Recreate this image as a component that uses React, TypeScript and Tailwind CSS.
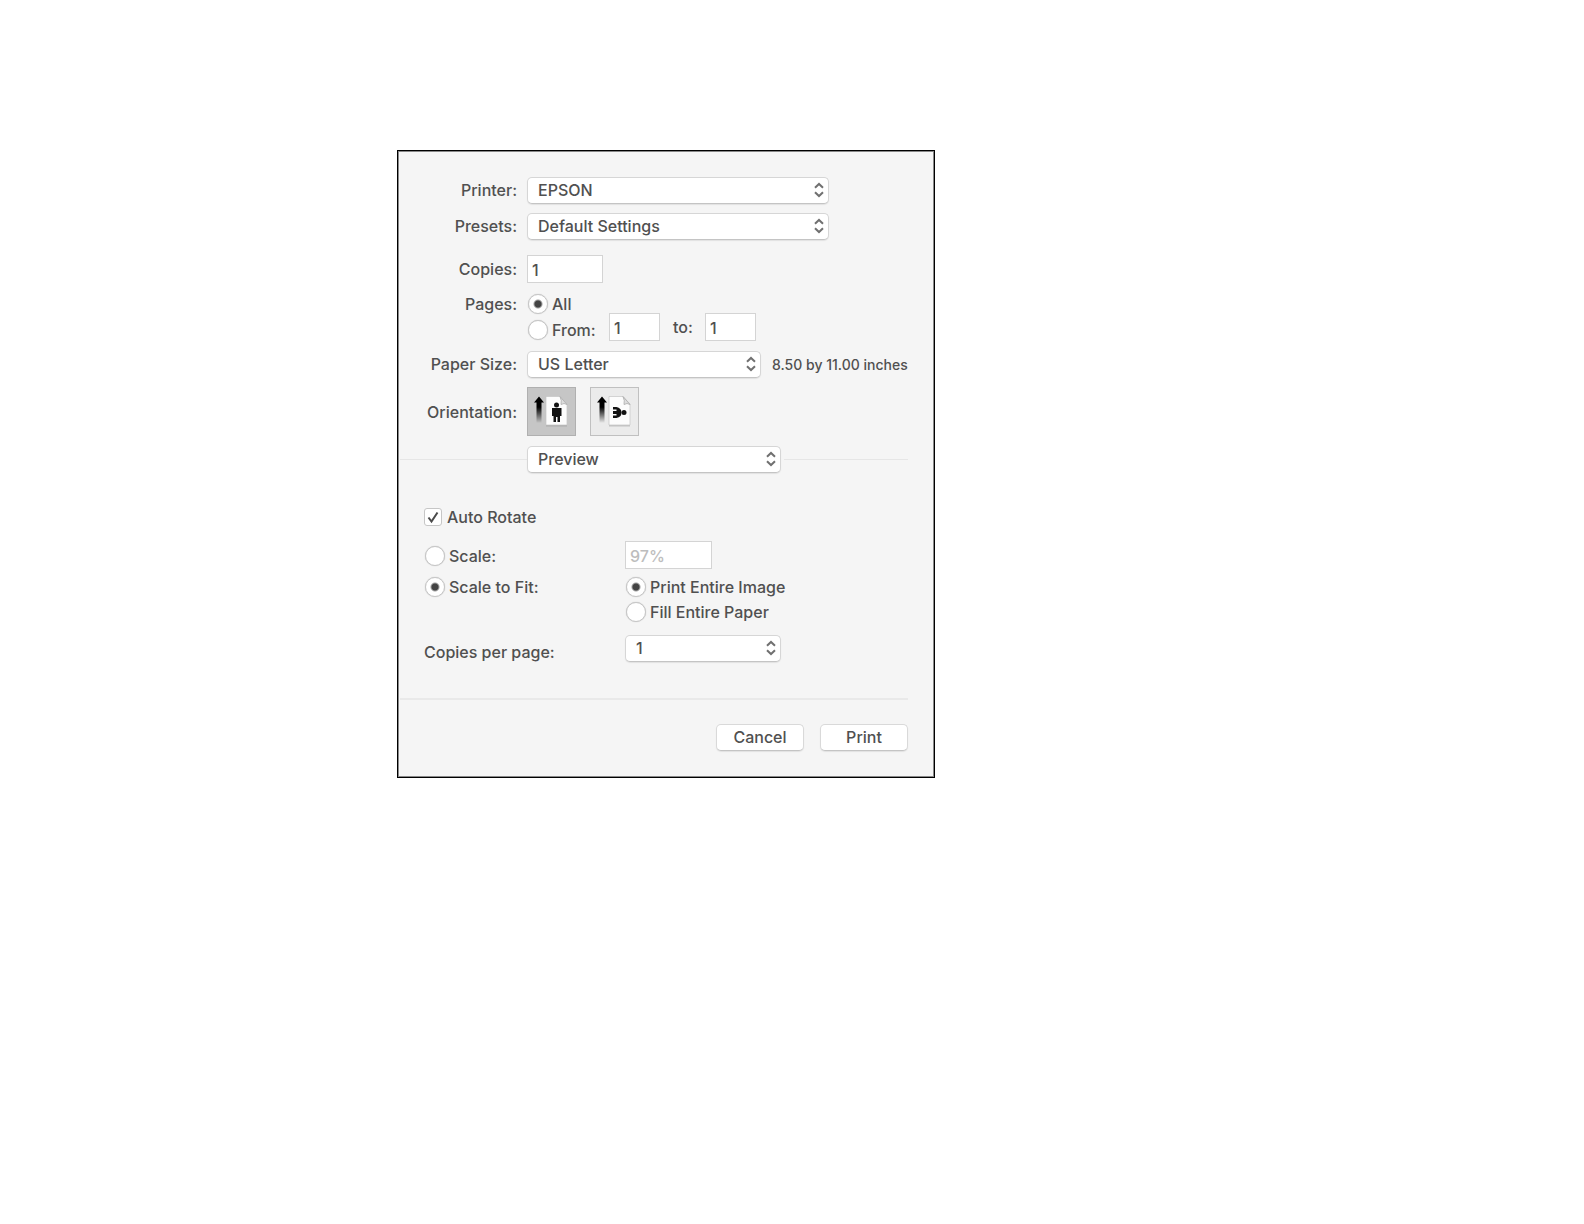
import React from "react";

type PopupProps = {
  id: string;
  options: string[];
  className: string;
  label?: string;
};

const Popup = ({ id, options, className, label }: PopupProps) => (
  <div className={`relative h-[27px] shrink-0 ${className}`}>
    <select
      id={id}
      aria-label={label}
      className="block h-full w-full appearance-none rounded-[5px] border border-[#d6d6d6] border-b-[#c4c4c4] bg-white pb-[2px] pl-[10px] pr-6 shadow-[0_1px_1px_#e2e2e2] outline-none"
    >
      {options.map((option) => (
        <option key={option}>{option}</option>
      ))}
    </select>
    <svg
      viewBox="0 0 10 16"
      className="pointer-events-none absolute right-[5px] top-[5px] h-4 w-[10px]"
      fill="none"
      stroke="#707070"
      strokeWidth="2"
    >
      <path d="M1 5.8 5 2l4 3.800M1 10.200 5 14l4-3.800" />
    </svg>
  </div>
);

type RadioProps = {
  name: string;
  text: string;
  checked?: boolean;
  className?: string;
};

const Radio = ({ name, text, checked, className = "" }: RadioProps) => (
  <label className={`flex items-center gap-1 whitespace-nowrap pl-px ${className}`}>
    <input
      type="radio"
      name={name}
      defaultChecked={checked}
      className="size-5 shrink-0 appearance-none rounded-full border border-[#c6c6c6] bg-white shadow-[0_0_1px_#bbb] outline-none checked:bg-[radial-gradient(circle,#444_3px,#fff_5px)]"
    />
    {text}
  </label>
);

const field = "h-7 border border-[#d4d4d4] bg-white pl-1 pt-[2px] outline-none";

const pushButton =
  "h-[27px] w-[88px] rounded-[5px] border border-[#d9d9d9] border-b-[#c4c4c4] bg-white pb-[2px] shadow-[0_1px_1px_#e2e2e2]";

const Arrow = ({ id }: { id: string }) => (
  <>
    <defs>
      <linearGradient id={id} x1="0" y1="0" x2="0" y2="1">
        <stop offset="0.4" stopColor="#000" />
        <stop offset="1" stopColor="#000" stopOpacity="0" />
      </linearGradient>
    </defs>
    <path d="M11 8.500l5 6h-2.500V35h-5V14.500H6z" fill={`url(#${id})`} />
  </>
);

const Sheet = () => (
  <>
    <path d="M18 10.500h14l7 7v21H18z" fill="#888" opacity="0.4" />
    <path d="M18 8.500h14l7 7.500v21H18z" fill="#fcfcfc" stroke="#c4c4c4" strokeWidth="0.7" />
    <path d="M32 8.500l7 8q-3-2-6 0 1-4-1-8z" fill="#ddd" stroke="#aaa" strokeWidth="0.8" />
  </>
);

const App = () => {
  return (
    <main className="min-h-screen bg-white pl-[397px] pt-[150px] font-['Inter',sans-serif] text-base font-medium leading-5 text-[#505050]">
      <form
        onSubmit={(e) => e.preventDefault()}
        className="w-[538px] border border-black bg-[#f5f5f5] pb-[26px] pr-[26px] pt-[26px] shadow-[inset_0_0_0_1px_#888]"
      >
        <div className="grid grid-cols-[119px_1fr] gap-x-[10px]">
          <label htmlFor="printer" className="self-center pb-[2px] text-right">Printer:</label>
          <Popup id="printer" options={["EPSON"]} className="w-[302px]" />

          <label htmlFor="presets" className="mt-[9px] self-center pb-[2px] text-right">Presets:</label>
          <Popup id="presets" options={["Default Settings"]} className="mt-[9px] w-[302px]" />

          <label htmlFor="copies" className="mt-[15px] self-center text-right">Copies:</label>
          <input id="copies" type="text" defaultValue="1" className={`mt-[15px] w-[76px] ${field}`} />

          <span className="mt-3 text-right leading-[18px]">Pages:</span>
          <div className="mt-3">
            <Radio name="pages" text="All" checked className="h-[18px] w-fit" />
            <div className="flex items-end">
              <Radio name="pages" text="From:" className="h-[23px] w-[82px]" />
              <input type="text" aria-label="From page" defaultValue="1" className={`w-[51px] ${field}`} />
              <label htmlFor="to" className="w-[45px] self-center pl-[13px]">to:</label>
              <input id="to" type="text" defaultValue="1" className={`w-[51px] ${field}`} />
            </div>
          </div>

          <label htmlFor="paper" className="mt-[10px] self-center pb-[2px] text-right">Paper Size:</label>
          <div className="mt-[10px] flex items-center gap-[11px]">
            <Popup id="paper" options={["US Letter"]} className="w-[234px]" />
            <span className="whitespace-nowrap text-sm leading-5">8.50 by 11.00 inches</span>
          </div>

          <span className="mt-[9px] self-center text-right">Orientation:</span>
          <div className="mt-[9px] flex gap-[14px]">
            <button type="button" aria-label="Portrait" className="size-[49px] border border-[#b0b0b0] bg-[#c6c6c6]">
              <svg viewBox="0 0 47 47" className="size-full">
                <Arrow id="portraitArrow" />
                <Sheet />
                <circle cx="28.500" cy="17" r="2.500" fill="#111" />
                <path d="M24 20h9.500v8H32v6h-2.500v-5h-1.500v5h-2.500v-6H24z" fill="#111" />
              </svg>
            </button>
            <button type="button" aria-label="Landscape" className="size-[49px] border border-[#c0c0c0] bg-[#ebebeb]">
              <svg viewBox="0 0 47 47" className="size-full">
                <Arrow id="landscapeArrow" />
                <Sheet />
                <circle cx="33" cy="24.500" r="2.500" fill="#111" />
                <path d="M22 19h3.500q5 1 5 5.500t-5 5.500H22v-2.500h3.500v-1.500H22v-3h3.500v-1.500H22z" fill="#111" />
              </svg>
            </button>
          </div>
        </div>

        <div className="mt-[10px] flex items-center">
          <hr className="ml-[2px] w-[127px] border-[#e6e6e6]" />
          <Popup id="section" label="Section" options={["Preview"]} className="w-[254px]" />
          <hr className="ml-[3px] flex-1 border-[#e6e6e6]" />
        </div>

        <div className="pl-[26px] pt-[35px]">
          <label className="flex h-[18px] w-fit items-center gap-[5px]">
            <span className="relative size-[18px]">
              <input
                type="checkbox"
                defaultChecked
                className="peer block size-full appearance-none rounded-[3px] border border-[#c6c6c6] bg-white outline-none"
              />
              <svg
                viewBox="0 0 18 18"
                className="pointer-events-none absolute inset-0 hidden size-full peer-checked:block"
                fill="none"
                stroke="#4a4a4a"
                strokeWidth="2"
              >
                <path d="M4.500 9.500l3 4L13.500 4.500" />
              </svg>
            </span>
            Auto Rotate
          </label>

          <div className="mt-[15px] flex items-center">
            <Radio name="scaling" text="Scale:" className="w-[201px] pt-[2px]" />
            <input
              type="text"
              aria-label="Scale percentage"
              defaultValue="97%"
              disabled
              className={`w-[87px] text-[#bdbdbd] ${field}`}
            />
          </div>

          <div className="mt-2 flex items-start">
            <Radio name="scaling" text="Scale to Fit:" checked className="w-[201px]" />
            <div className="flex flex-col gap-[5px]">
              <Radio name="fit" text="Print Entire Image" checked />
              <Radio name="fit" text="Fill Entire Paper" />
            </div>
          </div>

          <div className="mt-[13px] flex items-end">
            <label htmlFor="perPage" className="w-[201px]">Copies per page:</label>
            <Popup id="perPage" options={["1"]} className="w-[156px]" />
          </div>
        </div>

        <hr className="ml-[2px] mt-[36px] border-t-2 border-[#e9e9e9]" />

        <div className="mt-6 flex justify-end gap-4">
          <button type="button" className={pushButton}>Cancel</button>
          <button type="submit" className={pushButton}>Print</button>
        </div>
      </form>
    </main>
  );
};

export default App;
